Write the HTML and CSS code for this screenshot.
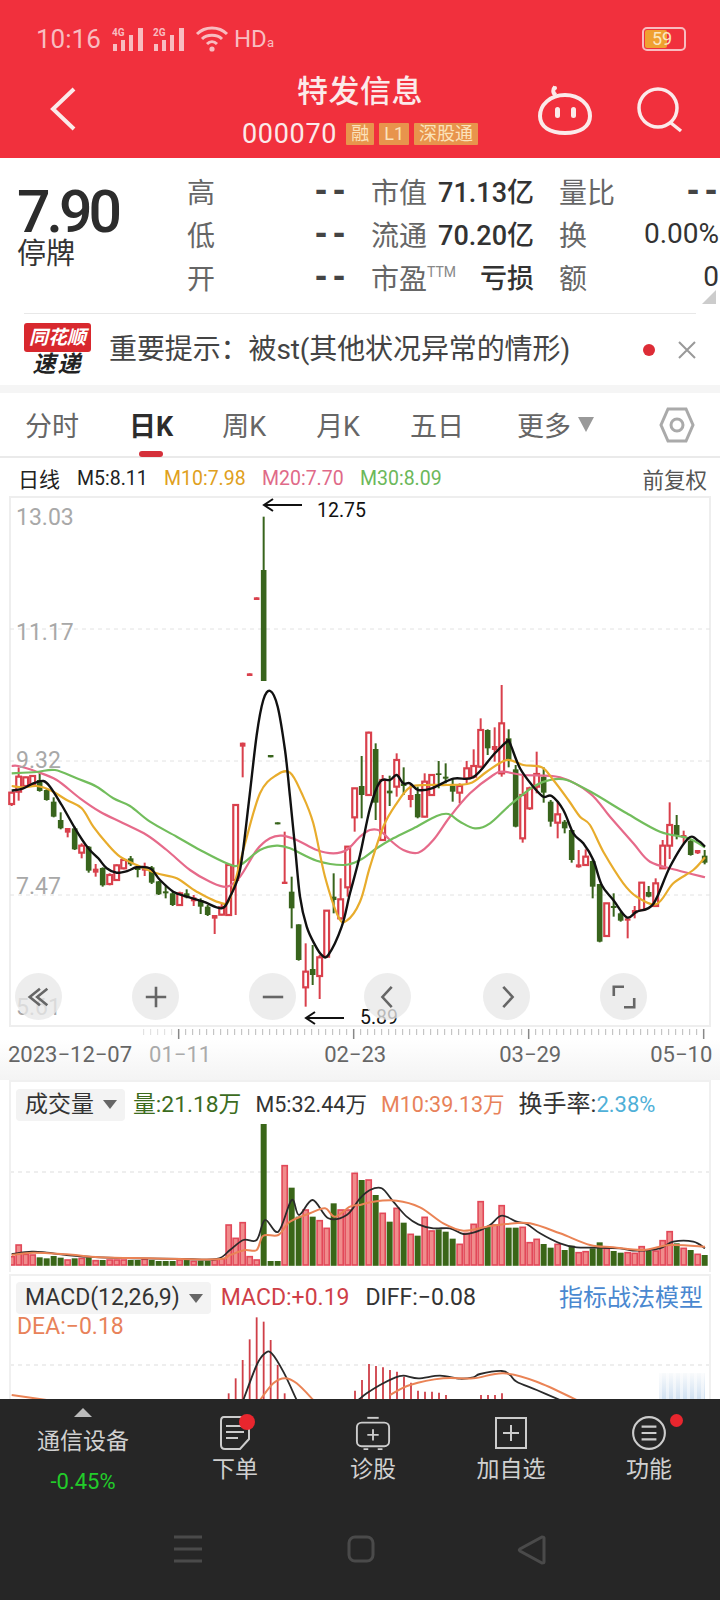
FILE: index.html
```html
<!DOCTYPE html>
<html lang="zh-CN">
<head>
    <meta charset="UTF-8">
    <meta name="viewport" content="width=device-width, initial-scale=1.0">
    <title>特发信息 000070</title>
    <link rel="stylesheet" href="styles.css">
</head>
<body>
    <header class="top">
        <div class="status-bar">
            <span class="clock">10:16</span>
            <svg class="signal" viewBox="0 0 34 24"><text x="0" y="9" class="net">4G</text><rect x="1" y="17" width="4" height="7"/><rect x="9" y="13" width="4" height="11"/><rect x="17" y="8" width="4" height="16"/><rect x="26" y="1" width="5" height="23"/></svg>
            <svg class="signal" viewBox="0 0 34 24"><text x="0" y="9" class="net">2G</text><rect x="1" y="17" width="4" height="7"/><rect x="9" y="13" width="4" height="11"/><rect x="17" y="8" width="4" height="16"/><rect x="26" y="1" width="5" height="23"/></svg>
            <svg class="wifi" viewBox="0 0 34 26"><path d="M2 8C10 0 24 0 32 8M7 13C12 8 22 8 27 13M12 18C15 15 19 15 22 18" fill="none" stroke="currentColor" stroke-width="3"/><circle cx="17" cy="23" r="2.6" fill="currentColor"/></svg>
            <span class="hd">HD<small>a</small></span>
            <span class="battery"><span class="battery-level">59</span></span>
        </div>
        <nav class="title-bar">
            <svg class="back" viewBox="0 0 26 44"><polyline points="24,2 3,22 24,42"/></svg>
            <div class="title">
                <h1>特发信息</h1>
                <div class="code-line">
                    <span class="code">000070</span>
                    <span class="tag">融</span>
                    <span class="tag">L1</span>
                    <span class="tag">深股通</span>
                </div>
            </div>
            <svg class="robot" viewBox="0 0 54 50"><path d="M18 10C14 8 15 4 17 2"/><circle cx="17" cy="3" r="2" class="solid"/><path d="M27 10C42 10 52 20 52 31C52 42 42 48 27 48C12 48 2 42 2 31C2 20 12 10 27 10Z"/><rect x="17" y="22" width="5" height="11" rx="2.5" class="solid"/><rect x="33" y="22" width="5" height="11" rx="2.5" class="solid"/></svg>
            <svg class="search" viewBox="0 0 46 46"><circle cx="21" cy="21" r="19"/><path d="M34 36L44 44"/></svg>
        </nav>
    </header>

    <section class="quote">
        <div class="price-box">
            <div class="price">7.90</div>
            <div class="halted">停牌</div>
        </div>
        <div class="quote-grid">
            <div class="cell cell-a"><span class="label">高</span><span class="dash">--</span></div>
            <div class="cell cell-b"><span class="label">市值</span><span class="value">71.13亿</span></div>
            <div class="cell cell-c"><span class="label">量比</span><span class="dash">--</span></div>
            <div class="cell cell-a"><span class="label">低</span><span class="dash">--</span></div>
            <div class="cell cell-b"><span class="label">流通</span><span class="value">70.20亿</span></div>
            <div class="cell cell-c"><span class="label">换</span><span class="value value-thin">0.00%</span></div>
            <div class="cell cell-a"><span class="label">开</span><span class="dash">--</span></div>
            <div class="cell cell-b"><span class="label">市盈<sup>TTM</sup></span><span class="value">亏损</span></div>
            <div class="cell cell-c"><span class="label">额</span><span class="value value-thin">0</span></div>
        </div>
        <span class="corner"></span>
    </section>

    <section class="notice">
        <div class="express-logo">
            <span class="flag">同花顺</span>
            <span class="express">速递</span>
        </div>
        <p class="notice-text">重要提示：被st(其他状况异常的情形)</p>
        <span class="notice-dot"></span>
        <svg class="notice-close" viewBox="0 0 18 18"><path d="M1 1L17 17M17 1L1 17"/></svg>
    </section>

    <nav class="tabs">
        <span class="tab tab-time">分时</span>
        <span class="tab tab-day">日K<i class="tab-mark"></i></span>
        <span class="tab tab-week">周K</span>
        <span class="tab tab-month">月K</span>
        <span class="tab tab-five">五日</span>
        <span class="tab tab-more">更多<i class="caret"></i></span>
        <svg class="hex" viewBox="0 0 36 36"><polygon points="9,2 27,2 34,18 27,34 9,34 2,18"/><circle cx="18" cy="18" r="6"/></svg>
    </nav>

    <div class="legend">
        <span class="legend-name">日线</span>
        <span class="ma5">M5:8.11</span>
        <span class="ma10">M10:7.98</span>
        <span class="ma20">M20:7.70</span>
        <span class="ma30">M30:8.09</span>
        <span class="adjust">前复权</span>
    </div>

    <section class="kline">
        <svg id="kline-chart" class="chart kline-chart" viewBox="0 496 720 531"></svg>
        <div class="chart-buttons">
            <span class="round-btn"><svg viewBox="0 0 28 28"><path d="M15 5L4 14L15 23M23 5L12 14L23 23"/></svg></span>
            <span class="round-btn"><svg viewBox="0 0 28 28"><path d="M3 14H25M14 3V25"/></svg></span>
            <span class="round-btn"><svg viewBox="0 0 28 28"><path d="M3 14H25"/></svg></span>
            <span class="round-btn round-btn-tight"><svg viewBox="0 0 28 28"><path d="M18 3L8 14L18 25"/></svg></span>
            <span class="round-btn round-btn-wide"><svg viewBox="0 0 28 28"><path d="M10 3L20 14L10 25"/></svg></span>
            <span class="round-btn"><svg viewBox="0 0 28 28"><path d="M14 3H3V13M14 25H25V15"/></svg></span>
        </div>
    </section>

    <svg id="axis-ticks" class="axis-ticks" viewBox="0 0 720 12"></svg>
    <div class="dates">
        <span class="date-start">2023−12−07</span>
        <span class="date-jan">01−11</span>
        <span class="date-mid">02−23</span>
        <span class="date-mid">03−29</span>
        <span class="date-end">05−10</span>
    </div>

    <section class="panel volume">
        <svg id="volume-chart" class="chart" viewBox="0 1080 720 192"></svg>
        <div class="panel-head">
            <span class="picker">成交量<i class="caret caret-dark"></i></span>
            <span class="c-green vol-now">量:21.18万</span>
            <span class="c-dark small-num">M5:32.44万</span>
            <span class="c-orange small-num">M10:39.13万</span>
            <span class="c-dark turnover">换手率:<span class="c-blue">2.38%</span></span>
        </div>
    </section>

    <section class="panel macd">
        <svg id="macd-chart" class="chart" viewBox="0 1274 720 125"></svg>
        <div class="panel-head">
            <span class="picker">MACD(12,26,9)<i class="caret caret-dark"></i></span>
            <span class="c-red">MACD:+0.19</span>
            <span class="c-dark">DIFF:−0.08</span>
            <span class="model-link">指标战法模型</span>
        </div>
        <div class="panel-sub c-orange">DEA:−0.18</div>
        <div class="blur-patch"></div>
    </section>

    <footer class="toolbar">
        <div class="tools">
            <div class="sector">
                <i class="sector-arrow"></i>
                <span class="sector-name">通信设备</span>
                <span class="sector-change">-0.45%</span>
            </div>
            <div class="tool">
                <span class="tool-icon">
                    <svg viewBox="0 0 32 36"><path d="M5 2H24V2C27 2 30 4 30 7V24L21 34H6C3 34 2 32 2 30V6C2 3 3 2 5 2Z"/><path d="M7 11H25M7 17H25M7 23H19"/></svg>
                    <i class="red-dot red-dot-big"></i>
                </span>
                <span>下单</span>
            </div>
            <div class="tool">
                <span class="tool-icon">
                    <svg viewBox="0 0 38 36"><path d="M13 2H25"/><rect x="2" y="7" width="34" height="25" rx="5"/><path d="M9 35H14M24 35H29M19 14V26M13 20H25"/></svg>
                </span>
                <span>诊股</span>
            </div>
            <div class="tool">
                <span class="tool-icon">
                    <svg viewBox="-1 -1 36 36"><rect x="2" y="2" width="30" height="30"/><path d="M17 9V25M9 17H25"/></svg>
                </span>
                <span>加自选</span>
            </div>
            <div class="tool">
                <span class="tool-icon">
                    <svg viewBox="0 0 34 34"><circle cx="17" cy="17" r="15"/><path d="M10 11H24M10 17H24M10 23H24"/></svg>
                    <i class="red-dot red-dot-small"></i>
                </span>
                <span>功能</span>
            </div>
        </div>
        <div class="system-nav">
            <svg class="sys-menu" viewBox="0 0 28 28"><path d="M0 2H28M0 14H28M0 26H28"/></svg>
            <svg class="sys-home" viewBox="0 0 28 28"><rect x="2" y="2" width="24" height="24" rx="6"/></svg>
            <svg class="sys-back" viewBox="0 0 30 30"><path d="M27 3V27C27 28 26 28 25 28L3 16C2 15 2 15 3 14L25 2C26 2 27 2 27 3Z"/></svg>
        </div>
    </footer>

    <script src="chart.js"></script>
</body>
</html>
```

FILE: styles.css
```css
* {
    margin: 0;
    padding: 0;
    box-sizing: border-box;
}

html, body {
    width: 720px;
    height: 1600px;
    overflow: hidden;
}

body {
    background-color: #fff;
    font-family: Roboto, "Noto Sans CJK SC", sans-serif;
    color: #333;
}

/* red header */
.top {
    height: 158px;
    background-color: #f1303d;
    color: #fbeaea;
}

.status-bar {
    height: 64px;
    padding: 14px 36px 0;
    display: flex;
    align-items: center;
    color: #f8bcc0;
}

.clock {
    font-size: 26px;
    width: 76px;
}

.signal {
    width: 34px;
    height: 24px;
    margin-right: 7px;
    fill: currentColor;
}

.net {
    font-size: 10px;
    font-weight: 700;
}

.wifi {
    width: 34px;
    height: 26px;
    margin-left: 1px;
    margin-right: 5px;
}

.hd {
    font-size: 24px;
}

.hd small {
    font-size: 13px;
}

.battery {
    margin-left: auto;
    margin-right: -2px;
    width: 44px;
    height: 24px;
    border: 2px solid #f8bcc0;
    border-radius: 5px;
    padding: 1px;
    display: flex;
}

.battery-level {
    width: 22px;
    background-color: #f0a030;
    border-radius: 2px;
    color: #fbe6c0;
    font-size: 18px;
    line-height: 18px;
    padding-left: 7px;
    white-space: nowrap;
}

.title-bar {
    height: 94px;
    display: flex;
    align-items: flex-start;
}

.back {
    width: 26px;
    height: 44px;
    margin: 23px 0 0 50px;
}

.back polyline {
    fill: none;
    stroke: #fbeaea;
    stroke-width: 4;
}

.title {
    width: 238px;
    margin: 10px 0 0 165px;
    display: flex;
    flex-direction: column;
    align-items: center;
}

.title h1 {
    font-size: 31px;
    font-weight: 500;
    line-height: 36px;
    letter-spacing: 0.5px;
}

.code-line {
    display: flex;
    align-items: center;
    gap: 5px;
    margin-top: 9px;
    white-space: nowrap;
}

.code {
    font-size: 27px;
    line-height: 30px;
    margin-right: 4px;
    letter-spacing: 0.7px;
}

.tag {
    height: 22px;
    padding: 0 5px;
    background-color: #e8944c;
    color: #fbe3bc;
    font-size: 18px;
    line-height: 22px;
    border-radius: 1px;
}

.robot {
    width: 54px;
    height: 50px;
    margin: 21px 0 0 59px;
    flex-shrink: 0;
    fill: none;
    stroke: #fbeaea;
    stroke-width: 4;
}

.robot .solid {
    fill: #fbeaea;
    stroke: none;
}

.search {
    width: 46px;
    height: 46px;
    margin: 23px 0 0 45px;
    flex-shrink: 0;
    fill: none;
    stroke: #fbeaea;
    stroke-width: 3.5;
}

/* price and stats */
.quote {
    height: 155px;
    display: flex;
    position: relative;
}

.price-box {
    width: 187px;
    padding: 27px 0 0 17px;
}

.price {
    font-size: 59px;
    font-weight: 500;
    line-height: 53px;
    letter-spacing: -4px;
    color: #2c2c2c;
}

.halted {
    font-size: 29px;
    line-height: 32px;
    margin-top: 0;
}

.quote-grid {
    padding-top: 11px;
    display: grid;
    grid-template-columns: 158px 163px 159px;
    grid-auto-rows: 43px;
    column-gap: 26px;
    width: 533px;
}

.cell {
    display: flex;
    justify-content: space-between;
    align-items: center;
    white-space: nowrap;
}

.cell-b .value {
    color: #333;
}

.cell-c {
    margin-left: -1px;
}

.cell-c .dash {
    margin-right: -1px;
}

.label {
    font-size: 28px;
    color: #666;
}

.label sup {
    font-size: 14px;
    vertical-align: 12px;
    line-height: 0;
    color: #888;
}

.value {
    font-size: 27px;
    font-weight: 500;
}

.value-thin {
    font-size: 28px;
    font-weight: 400;
}

.dash {
    font-family: "DejaVu Sans Mono", monospace;
    font-size: 30px;
    font-weight: 700;
    line-height: 30px;
    color: #444;
    margin-right: -3px;
}

.corner {
    position: absolute;
    right: 4px;
    top: 132px;
    width: 0;
    height: 0;
    border-left: 14px solid transparent;
    border-bottom: 14px solid #ccc;
}

/* notice strip */
.notice {
    height: 72px;
    margin: 0 24px;
    border-top: 1px solid #e8e8e8;
    display: flex;
    align-items: center;
}

.express-logo {
    width: 67px;
    height: 55px;
    display: flex;
    flex-direction: column;
    align-items: center;
    margin-top: 1px;
}

.flag {
    width: 67px;
    height: 29px;
    background-color: #d8282e;
    border-radius: 3px;
    color: #fff;
    font-size: 19px;
    line-height: 29px;
    font-weight: 700;
    font-style: italic;
    text-align: center;
}

.express {
    font-size: 23px;
    line-height: 26px;
    font-weight: 700;
    font-style: italic;
    color: #222;
    letter-spacing: 2px;
}

.notice-text {
    margin-left: 18px;
    font-size: 28px;
    line-height: 36px;
    letter-spacing: -0.1px;
    color: #444;
    white-space: nowrap;
}

.notice-dot {
    width: 12px;
    height: 12px;
    margin-left: auto;
    border-radius: 50%;
    background-color: #dd2c36;
}

.notice-close {
    width: 18px;
    height: 18px;
    margin-left: 23px;
    fill: none;
    stroke: #999;
    stroke-width: 2;
}

/* tabs */
.tabs {
    height: 73px;
    border-top: 8px solid #f5f5f5;
    border-bottom: 2px solid #eaeaea;
    display: flex;
    align-items: center;
    font-size: 27px;
    color: #666;
}

.tab {
    position: relative;
    white-space: nowrap;
}

.tab-time { margin-left: 25px; }
.tab-day { margin-left: 50px; color: #2c2c2c; font-weight: 700; }
.tab-week { margin-left: 49px; }
.tab-month { margin-left: 50px; }
.tab-five { margin-left: 50px; }
.tab-more { margin-left: 53px; display: flex; align-items: center; }

.tab-mark {
    position: absolute;
    left: 10px;
    bottom: -13px;
    width: 24px;
    height: 6px;
    border-radius: 3px;
    background-color: #d5303a;
}

.caret {
    margin-left: 7px;
    width: 0;
    height: 0;
    border-left: 8px solid transparent;
    border-right: 8px solid transparent;
    border-top: 15px solid #999;
}

.hex {
    width: 36px;
    height: 36px;
    margin-left: auto;
    margin-right: 25px;
    fill: none;
    stroke: #aaa;
    stroke-width: 3;
}

/* moving average legend */
.legend {
    height: 38px;
    padding: 2px 13px 0 18px;
    display: flex;
    align-items: center;
    font-size: 19.5px;
    white-space: nowrap;
}

.legend-name { width: 59px; font-size: 21px; color: #222; }
.ma5 { width: 87px; color: #222; }
.ma10 { width: 98px; color: #e0a020; }
.ma20 { width: 98px; color: #e06a88; }
.ma30 { color: #6cb85a; }
.adjust { margin-left: auto; font-size: 21.5px; color: #555; }

/* charts */
.kline {
    height: 531px;
    margin: 0 9px;
    border: 2px solid #eee;
    position: relative;
}

.chart {
    position: absolute;
    left: -11px;
    top: -2px;
    width: 720px;
    display: block;
}

.kline-chart {
    height: 531px;
}

.chart-buttons {
    position: absolute;
    left: 4px;
    bottom: 5px;
    display: flex;
    gap: 70px;
}

.round-btn {
    width: 47px;
    height: 47px;
    border-radius: 50%;
    background-color: rgba(232, 232, 232, 0.78);
    display: flex;
    align-items: center;
    justify-content: center;
}

.round-btn-tight { margin-left: -2px; }
.round-btn-wide { margin-left: 2px; }

.round-btn svg {
    width: 26px;
    height: 26px;
    fill: none;
    stroke: #666;
    stroke-width: 2.8;
}

.axis-ticks {
    display: block;
    width: 720px;
    height: 12px;
}

.dates {
    height: 41px;
    padding: 1px 0 0 8px;
    display: flex;
    font-size: 22px;
    line-height: 30px;
    color: #666;
    white-space: nowrap;
    background: linear-gradient(#fff, #f4f4f4);
}

.date-jan { margin-left: 17px; color: #aaa; }
.date-mid { margin-left: 113px; }
.date-end { margin-left: 89px; }

.panel {
    margin: 0 9px;
    border: 2px solid #f0f0f0;
    border-bottom: none;
    position: relative;
    overflow: hidden;
}

.volume {
    height: 192px;
}

.macd {
    height: 125px;
    margin-top: 2px;
}

.panel-head {
    position: relative;
    padding: 6px 0 0 5px;
    display: flex;
    align-items: center;
    gap: 14px;
    font-size: 23px;
    line-height: 32px;
    white-space: nowrap;
}

.macd .panel-head {
    gap: 16px;
}

.picker {
    height: 32px;
    padding: 0 8px 0 9px;
    margin-right: -6px;
    background-color: #f3f3f3;
    border-radius: 4px;
    color: #333;
    display: flex;
    align-items: center;
}

.caret-dark {
    border-left-width: 7px;
    border-right-width: 7px;
    border-top: 9px solid #666;
    margin-left: 9px;
}

.vol-now {
    font-size: 22.8px;
}

.small-num {
    font-size: 21.5px;
}

.turnover {
    font-size: 24px;
}

.turnover .c-blue {
    font-size: 22px;
}

.panel-sub {
    position: relative;
    margin: 0 0 0 6px;
    font-size: 23px;
    line-height: 26px;
}

.model-link {
    position: absolute;
    right: 6px;
    color: #4a88d0;
    font-size: 24px;
}

.blur-patch {
    position: absolute;
    right: 4px;
    bottom: 0;
    width: 46px;
    height: 26px;
    background:
        repeating-linear-gradient(90deg, rgba(255, 255, 255, 0.5) 0 3px, transparent 3px 7px),
        linear-gradient(#f8fafc, #c6daef);
    opacity: 0.8;
}

.c-green { color: #3c6c1e; }
.c-dark { color: #333; }
.c-orange { color: #e8825a; }
.c-blue { color: #4fb0d8; }
.c-red { color: #cf3f48; }

/* bottom toolbar */
.toolbar {
    height: 201px;
    background-color: #262626;
    color: #d0d0d0;
}

.tools {
    height: 122px;
    display: grid;
    grid-template-columns: 166px repeat(4, 138px);
}

.sector {
    display: flex;
    flex-direction: column;
    align-items: center;
    padding-top: 9px;
}

.sector-arrow {
    width: 0;
    height: 0;
    border-left: 9px solid transparent;
    border-right: 9px solid transparent;
    border-bottom: 9px solid #bbb;
}

.sector-name {
    margin-top: 10px;
    font-size: 23px;
    line-height: 30px;
}

.sector-change {
    margin-top: 11px;
    font-size: 22px;
    line-height: 28px;
    color: #22cc2a;
}

.tool {
    display: flex;
    flex-direction: column;
    align-items: center;
    padding-top: 16px;
    font-size: 23px;
    line-height: 30px;
}

.tool-icon {
    height: 38px;
    margin-bottom: 2px;
    position: relative;
    display: flex;
}

.tool-icon svg {
    height: 36px;
    width: 36px;
    fill: none;
    stroke: #ccc;
    stroke-width: 2;
}

.red-dot {
    position: absolute;
    border-radius: 50%;
    background-color: #e8262e;
}

.red-dot-big {
    right: -2px;
    top: -1px;
    width: 16px;
    height: 16px;
}

.red-dot-small {
    right: -16px;
    top: -1px;
    width: 13px;
    height: 13px;
}

.system-nav {
    height: 79px;
    display: flex;
    align-items: flex-start;
    padding-top: 14px;
    stroke: #4a4a4a;
    fill: none;
    stroke-width: 3;
}

.sys-menu { width: 28px; height: 28px; margin-left: 174px; }
.sys-home { width: 28px; height: 28px; margin-left: 145px; }
.sys-back { width: 30px; height: 30px; margin-left: 142px; }
```

FILE: chart.js
```js
// all chart numbers are sampled on a 3x grid, x from the left edge, y from the chart's own origin
var SVG_NS = 'http://www.w3.org/2000/svg';
var RED = '#d9404c';
var GREEN = '#38641c';

function add(svg, tag, attrs, text) {
    var el = document.createElementNS(SVG_NS, tag);
    for (var key in attrs) {
        el.setAttribute(key, attrs[key]);
    }
    if (text) {
        el.textContent = text;
    }
    svg.appendChild(el);
    return el;
}

// catmull-rom through the sample points
function smoothPath(points, originY) {
    var p = points.map(function (pt) { return [pt[0] / 3, originY + pt[1] / 3]; });
    var d = 'M' + p[0][0].toFixed(1) + ' ' + p[0][1].toFixed(1);
    for (var i = 0; i < p.length - 1; i++) {
        var p0 = p[i - 1] || p[i];
        var p1 = p[i];
        var p2 = p[i + 1];
        var p3 = p[i + 2] || p2;
        d += 'C' + (p1[0] + (p2[0] - p0[0]) / 6).toFixed(1) + ' ' + (p1[1] + (p2[1] - p0[1]) / 6).toFixed(1) +
            ' ' + (p2[0] - (p3[0] - p1[0]) / 6).toFixed(1) + ' ' + (p2[1] - (p3[1] - p1[1]) / 6).toFixed(1) +
            ' ' + p2[0].toFixed(1) + ' ' + p2[1].toFixed(1);
    }
    return d;
}

function drawLine(svg, points, originY, color, width) {
    add(svg, 'path', { d: smoothPath(points, originY), fill: 'none', stroke: color, 'stroke-width': width || 2.2 });
}

function gridLine(svg, y, color) {
    add(svg, 'line', { x1: 10, x2: 710, y1: y, y2: y, stroke: color || '#e2e2e2', 'stroke-width': 1, 'stroke-dasharray': '4 4' });
}

// x of candle k on the 3x grid
function slot(k) {
    return 35 + 21 * k;
}

// shift the right half samples (second crop) onto the same x scale
function shifted(points) {
    return points.map(function (pt) { return [pt[0] + 1080, pt[1]]; });
}

// [wick top, body top, body bottom, wick bottom, colour]
var candles = [
    [335, 338, 372, 378, 'r'], [262, 290, 335, 362, 'r'], [290, 292, 318, 320, 'r'], [288, 288, 312, 320, 'r'],
    [280, 300, 333, 335, 'g'], [325, 330, 360, 362, 'g'], [352, 365, 410, 412, 'g'], [397, 420, 445, 448, 'g'],
    [444, 444, 458, 472, 'r'], [440, 445, 508, 510, 'g'], [490, 497, 518, 535, 'r'], [498, 500, 572, 578, 'g'],
    [552, 566, 578, 590, 'r'], [562, 564, 616, 620, 'g'], [580, 585, 612, 616, 'r'], [553, 556, 600, 603, 'r'],
    [535, 540, 565, 568, 'r'], [528, 535, 553, 558, 'g'], [555, 560, 570, 592, 'g'], [548, 560, 572, 588, 'r'],
    [558, 562, 608, 612, 'g'], [603, 604, 643, 645, 'g'], [615, 634, 640, 655, 'g'], [635, 640, 675, 678, 'g'],
    [635, 640, 675, 678, 'r'], [628, 640, 652, 655, 'g'], [645, 652, 664, 678, 'r'], [655, 660, 680, 702, 'g'],
    [675, 680, 705, 708, 'g'], [705, 705, 716, 762, 'r'], [670, 682, 704, 706, 'r'], [555, 555, 705, 707, 'r'],
    [375, 375, 600, 705, 'r'], [188, 188, 200, 292, 'r'], [-20, -20, -12, -12, 'r'], [-248, -248, -240, -240, 'r'],
    [-490, -330, 3, 3, 'g'], [225, 225, 232, 232, 'g'], [427, 427, 433, 433, 'g'], [455, 605, 612, 612, 'r'],
    [590, 635, 685, 745, 'g'], [733, 733, 840, 842, 'g'], [790, 875, 922, 980, 'r'], [795, 867, 885, 915, 'g'],
    [825, 832, 888, 957, 'r'], [692, 692, 830, 832, 'r'], [580, 650, 660, 700, 'g'], [595, 658, 715, 720, 'r'],
    [500, 500, 622, 650, 'r'], [325, 325, 412, 455, 'r'], [228, 318, 345, 415, 'g'], [155, 158, 345, 348, 'r'],
    [190, 207, 368, 420, 'g'], [285, 300, 480, 482, 'r'], [287, 332, 340, 378, 'g'], [220, 240, 320, 350, 'r'],
    [262, 310, 318, 345, 'g'], [310, 345, 360, 382, 'r'], [320, 342, 412, 415, 'g'], [280, 305, 410, 412, 'r'],
    [283, 285, 345, 347, 'r'], [243, 280, 285, 325, 'g'], [250, 290, 296, 310, 'g'], [295, 318, 335, 365, 'g'],
    [310, 318, 338, 370, 'r'], [243, 265, 295, 310, 'r'], [208, 258, 290, 295, 'r'], [115, 150, 260, 265, 'r'],
    [148, 150, 205, 225, 'g'], [142, 198, 210, 245, 'r'], [15, 130, 280, 290, 'r'], [148, 175, 240, 262, 'g'],
    [255, 268, 440, 442, 'g'], [285, 345, 475, 488, 'r'], [320, 325, 385, 390, 'r'], [215, 282, 320, 340, 'r'],
    [262, 290, 338, 368, 'g'], [360, 365, 425, 440, 'g'], [365, 403, 428, 475, 'r'], [420, 425, 445, 460, 'g'],
    [450, 450, 540, 548, 'g'], [510, 553, 562, 563, 'r'], [508, 530, 555, 557, 'r'], [538, 543, 620, 655, 'g'],
    [612, 612, 785, 787, 'g'], [670, 670, 768, 770, 'r'], [640, 678, 684, 710, 'g'], [695, 700, 722, 725, 'g'],
    [715, 715, 722, 775, 'r'], [678, 690, 700, 715, 'r'], [608, 608, 690, 692, 'r'], [618, 636, 650, 652, 'g'],
    [595, 610, 678, 680, 'r'], [480, 497, 565, 567, 'r'], [367, 435, 497, 537, 'r'], [405, 435, 465, 478, 'g'],
    [452, 465, 472, 490, 'r'], [478, 482, 525, 527, 'g'], [510, 510, 520, 522, 'r'], [510, 527, 548, 553, 'g']
];

var ma5 = [[35, 332], [70, 325], [100, 310], [130, 303], [150, 320], [185, 375], [225, 445], [265, 505], [295, 535], [320, 565], [350, 578], [385, 572], [410, 562], [450, 565], [480, 600], [520, 635], [560, 650], [610, 665], [665, 685], [690, 650], [720, 570], [745, 380], [770, 165], [790, 60], [811, 33], [833, 80], [855, 210], [870, 350], [885, 500], [900, 650], [920, 740], [945, 795], [965, 825], [985, 825], [1025, 740], [1050, 640]]
    .concat(shifted([[0, 525], [30, 385], [60, 305], [90, 300], [110, 285], [130, 310], [150, 310], [175, 330], [215, 325], [280, 296], [340, 292], [400, 225], [440, 185], [450, 190], [480, 265], [520, 320], [550, 350], [575, 348], [610, 390], [640, 460], [670, 490], [700, 540], [725, 615], [760, 660], [800, 712], [830, 695], [880, 672], [930, 560], [985, 475], [1015, 482], [1035, 500]]));

var ma10 = [[35, 318], [70, 322], [110, 318], [150, 330], [200, 360], [245, 385], [280, 440], [320, 490], [360, 530], [410, 555], [470, 580], [530, 595], [590, 635], [660, 668], [690, 655], [730, 510], [780, 340], [830, 285], [870, 278], [905, 340], [940, 430], [975, 590], [1015, 710], [1040, 722]]
    .concat(shifted([[0, 665], [30, 560], [70, 440], [110, 370], [150, 322], [200, 315], [260, 315], [330, 310], [380, 275], [440, 240], [490, 255], [545, 262], [580, 300], [625, 360], [660, 410], [690, 435], [730, 515], [790, 610], [830, 650], [890, 672], [940, 610], [1000, 570], [1035, 532]]));

var ma20 = [[35, 258], [55, 258], [110, 275], [170, 300], [240, 355], [300, 395], [370, 430], [440, 465], [500, 510], [570, 570], [630, 605], [680, 620], [720, 590], [770, 510], [810, 475], [845, 467], [890, 480], [950, 510], [1000, 520], [1040, 510]]
    .concat(shifted([[0, 470], [30, 450], [60, 452], [90, 480], [130, 510], [175, 518], [220, 480], [270, 410], [330, 340], [400, 285], [430, 275], [490, 285], [600, 292], [690, 340], [750, 410], [820, 490], [870, 545], [950, 570], [1035, 592]]));

var ma30 = [[35, 280], [110, 276], [165, 270], [230, 295], [290, 320], [340, 355], [390, 378], [450, 425], [530, 470], [600, 510], [680, 550], [720, 555], [780, 510], [830, 497], [870, 505], [950, 542], [1030, 555]]
    .concat(shifted([[0, 540], [50, 505], [100, 475], [170, 440], [230, 408], [265, 402], [300, 425], [345, 445], [390, 430], [450, 375], [520, 320], [570, 300], [620, 300], [700, 340], [800, 400], [900, 455], [985, 475], [1035, 502]]));

function drawKline() {
    var svg = document.getElementById('kline-chart');
    var Y0 = 680;
    [629, 761, 895].forEach(function (y) { gridLine(svg, y); });

    candles.forEach(function (c, k) {
        var x = slot(k) / 3;
        var color = c[4] === 'r' ? RED : GREEN;
        var top = Y0 + c[1] / 3;
        var bottom = Y0 + c[2] / 3;
        add(svg, 'line', { x1: x, x2: x, y1: Y0 + c[0] / 3, y2: Y0 + c[3] / 3, stroke: color, 'stroke-width': 2 });
        if (c[4] === 'r' && bottom - top > 6) {
            add(svg, 'rect', { x: x - 2.4, y: top, width: 4.8, height: bottom - top, fill: '#fff', stroke: color, 'stroke-width': 2.2 });
        } else {
            add(svg, 'rect', { x: x - 2.8, y: top, width: 5.6, height: bottom - top, fill: color });
        }
    });

    drawLine(svg, ma20, Y0, '#e66a8a');
    drawLine(svg, ma30, Y0, '#72bd5c');
    drawLine(svg, ma10, Y0, '#e8ac2c');
    drawLine(svg, ma5, Y0, '#111', 2.4);

    var labels = [['13.03', 525], ['11.17', 640], ['9.32', 768], ['7.47', 894], ['5.61', 1015]];
    labels.forEach(function (l) {
        add(svg, 'text', { x: 16, y: l[1], fill: '#a8a8a8', 'font-size': 23, 'font-family': 'Roboto' }, l[0]);
    });

    // high and low markers
    add(svg, 'path', { d: 'M302 505H264M273 499L264 505L273 511M344 1018H306M315 1012L306 1018L315 1024', fill: 'none', stroke: '#111', 'stroke-width': 2 });
    add(svg, 'text', { x: 317, y: 517, fill: '#111', 'font-size': 19.5, 'font-family': 'Roboto' }, '12.75');
    add(svg, 'text', { x: 360, y: 1024, fill: '#111', 'font-size': 19.5, 'font-family': 'Roboto' }, '5.89');
}

function drawTicks() {
    var svg = document.getElementById('axis-ticks');
    for (var k = 19; k < 100; k++) {
        var x = 11.67 + 7 * k - 1;
        var major = k === 24 || k === 49 || k === 74 || k === 99;
        var faded = k < 24;
        add(svg, 'line', { x1: x, x2: x, y1: 2, y2: major ? 12 : 8, stroke: major ? '#888' : (faded ? '#ddd' : '#bbb'), 'stroke-width': major ? 1.5 : 1 });
    }
}

// top edge of each volume bar
var volumes = [560, 525, 553, 555, 562, 565, 558, 563, 570, 565, 565, 562, 572, 570, 570, 570, 570, 570, 570, 568,
    570, 573, 573, 573, 570, 570, 574, 572, 572, 570, 567, 465, 505, 458, 560, 570, 162, 573, 573, 287,
    353, 440, 420, 440, 452, 475, 400, 420, 420, 310, 330, 330, 375, 430, 455, 415, 458, 493, 497, 442,
    483, 478, 485, 506, 523, 490, 463, 395, 470, 465, 407, 473, 473, 472, 518, 508, 522, 533, 523, 540,
    527, 548, 545, 535, 517, 535, 543, 548, 548, 550, 530, 543, 543, 512, 485, 520, 535, 540, 553, 555];

var volBlack = [[35, 552], [95, 545], [140, 548], [200, 555], [300, 562], [400, 565], [550, 567], [650, 567], [690, 540], [730, 510], [770, 510], [795, 450], [835, 485], [875, 390], [897, 435], [938, 390], [985, 445], [1040, 435]]
    .concat(shifted([[0, 385], [30, 360], [65, 355], [100, 395], [140, 440], [175, 463], [220, 475], [270, 475], [310, 492], [350, 485], [390, 465], [425, 437], [470, 455], [500, 462], [540, 490], [600, 520], [650, 532], [710, 533], [780, 535], [830, 542], [900, 535], [940, 515], [1000, 515], [1035, 535]]));

var volOrange = [[35, 555], [100, 548], [200, 553], [300, 562], [450, 565], [650, 568], [690, 555], [735, 540], [770, 540], [790, 497], [835, 495], [870, 455], [930, 430], [975, 415], [1005, 440], [1050, 410]]
    .concat(shifted([[0, 405], [40, 395], [110, 392], [180, 412], [250, 460], [310, 482], [380, 470], [440, 462], [510, 460], [600, 490], [690, 525], [760, 532], [850, 540], [930, 525], [1035, 530]]));

function drawVolume() {
    var svg = document.getElementById('volume-chart');
    var Y0 = 1070;
    gridLine(svg, 1172, '#ddd');

    volumes.forEach(function (top, k) {
        var x = slot(k) / 3;
        var y = Y0 + top / 3;
        var h = 1265 - y;
        if (candles[k][4] === 'r') {
            add(svg, 'rect', { x: x - 2.6, y: y, width: 5.2, height: h, fill: '#f08c8c', stroke: '#e24858', 'stroke-width': 1.6 });
        } else {
            add(svg, 'rect', { x: x - 3, y: y, width: 6, height: h + 0.8, fill: '#3a6618' });
        }
    });

    drawLine(svg, volBlack, Y0, '#2a2a2a', 1.8);
    drawLine(svg, volOrange, Y0, '#ea8355', 2);
}

// top edge of each histogram bar, keyed by 3x x position
var macdBars = [[686, 970], [707, 925], [728, 870], [749, 808], [770, 742], [791, 755], [812, 810], [833, 885], [854, 970],
    [1065, 962], [1086, 930], [1107, 882], [1128, 888], [1149, 892], [1170, 900], [1191, 905], [1212, 920], [1233, 938], [1254, 962], [1275, 965], [1296, 965], [1317, 968], [1338, 975],
    [1443, 975], [1464, 975], [1485, 975], [1506, 970]];

var macdDark = [[[730, 990], [770, 885], [795, 850], [815, 850], [850, 905], [890, 990]],
    shifted([[-5, 990], [20, 970], [60, 945], [100, 925], [130, 917], [175, 925], [240, 917], [300, 926], [340, 922], [360, 912], [425, 903], [450, 915], [470, 935], [530, 960], [600, 990]])];

var macdOrange = [[[35, 975], [140, 990]],
    [[780, 990], [820, 940], [855, 925], [890, 940], [940, 990]],
    shifted([[90, 975], [150, 945], [250, 925], [340, 925], [430, 910], [530, 935], [650, 990]])];

function drawMacd() {
    var svg = document.getElementById('macd-chart');
    var Y0 = 1070;
    gridLine(svg, 1365, '#ddd');

    macdBars.forEach(function (b) {
        add(svg, 'line', { x1: b[0] / 3, x2: b[0] / 3, y1: Y0 + b[1] / 3, y2: 1400, stroke: '#cf3f48', 'stroke-width': 1.8 });
    });
    macdDark.forEach(function (pts) { drawLine(svg, pts, Y0, '#2a2a2a', 1.8); });
    macdOrange.forEach(function (pts) { drawLine(svg, pts, Y0, '#ea8355', 2); });
}

drawKline();
drawTicks();
drawVolume();
drawMacd();
```
